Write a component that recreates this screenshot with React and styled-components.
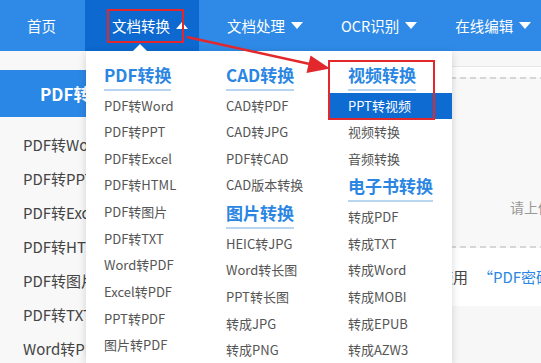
import React from "react";
import styled, { createGlobalStyle } from "styled-components";

const GlobalStyle = createGlobalStyle`
  html, body { margin: 0; padding: 0; }
  body {
    font-family: "Noto Sans CJK SC", "Noto Sans", sans-serif;
    background: #f7f7f7;
  }
`;

const Page = styled.div`
  position: relative;
  width: 541px;
  height: 363px;
  overflow: hidden;
  background: #f7f7f7;
`;

const NavBar = styled.nav`
  display: flex;
  height: 51px;
  background: #2e8ae6;
`;

const NavItem = styled.div`
  display: flex;
  align-items: center;
  gap: 6px;
  height: 100%;
  padding: ${(p) =>
    p.$plain ? "0 29px 0 27px" : p.$active ? "0 11px 0 27px" : "0 10px 0 28px"};
  background: ${(p) => (p.$active ? "#0d69cf" : "transparent")};
  color: #fff;
  font-size: 14.5px;
  white-space: nowrap;
`;

const Caret = styled.span`
  width: 0;
  height: 0;
  border-left: 6px solid transparent;
  border-right: 6px solid transparent;
  ${(p) =>
    p.$up
      ? "border-bottom: 7px solid #fff;"
      : "border-top: 7px solid #fff;"}
`;

const Body = styled.div`
  display: flex;
  height: 312px;
`;

const Sidebar = styled.aside`
  width: 220px;
  flex: none;
  padding-top: 19px;
  background: #f8f8f8;
`;

const SideHeader = styled.div`
  height: 47px;
  line-height: 47px;
  padding-left: 40px;
  background: #2b87e5;
  color: #fff;
  font-size: 17px;
  font-weight: 700;
`;

const SideList = styled.ul`
  list-style: none;
  margin: 0;
  padding: 11px 0 0 23px;
`;

const SideItem = styled.li`
  height: 34px;
  line-height: 34px;
  color: #444;
  font-size: 15px;
`;

const Main = styled.main`
  flex: 1;
  padding-top: 15px;
`;

const Card = styled.section`
  background: #fdfdfd;
  border-top: 1px solid #e6e6e6;
  padding-top: 10px;
`;

const UploadBox = styled.div`
  height: 171px;
  border-top: 2px dashed #d6d6d6;
  border-bottom: 2px dashed #d6d6d6;
  background: #f8f8f8;
  padding: 118px 0 0 290px;
  box-sizing: border-box;
  color: #999;
  font-size: 14px;
  white-space: nowrap;
`;

const InfoRow = styled.div`
  height: 58px;
  line-height: 58px;
  padding-left: 188px;
  background: #fff;
  color: #444;
  font-size: 15px;
  white-space: nowrap;
`;

const Blue = styled.span`
  margin-left: 10px;
  color: #2a86e2;
`;

const Dropdown = styled.div`
  position: absolute;
  left: 86px;
  top: 51px;
  width: 366px;
  height: 312px;
  display: grid;
  grid-template-columns: repeat(3, 122px);
  align-content: start;
  padding-top: 10px;
  box-sizing: border-box;
  background: #fff;
  box-shadow: 0 2px 8px rgba(0, 0, 0, 0.16);
`;

const Pointer = styled.span`
  position: absolute;
  left: 47px;
  top: -7px;
  width: 0;
  height: 0;
  border-left: 7px solid transparent;
  border-right: 7px solid transparent;
  border-bottom: 7px solid #fff;
`;

const Column = styled.div`
  display: flex;
  flex-direction: column;
`;

const HeaderWrap = styled.div`
  padding-left: 18px;
  height: 31.5px;
`;

const Header = styled.span`
  display: inline-block;
  line-height: 27px;
  padding-bottom: 1px;
  border-bottom: 2px solid #b9d5f2;
  color: #2a86e2;
  font-size: 17px;
  font-weight: 700;
`;

const Item = styled.div`
  height: 26.67px;
  line-height: 26.67px;
  padding-left: 18px;
  font-size: 13px;
  color: ${(p) => (p.$active ? "#fff" : "#555")};
  background: ${(p) => (p.$active ? "#0d6bd1" : "transparent")};
  white-space: nowrap;
`;

const RedBox = styled.div`
  position: absolute;
  border: 2px solid #e2282c;
  box-sizing: border-box;
  pointer-events: none;
`;

const ArrowSvg = styled.svg`
  position: absolute;
  left: 0;
  top: 0;
  pointer-events: none;
`;

const columns = [
  [
    { h: "PDF转换" },
    "PDF转Word",
    "PDF转PPT",
    "PDF转Excel",
    "PDF转HTML",
    "PDF转图片",
    "PDF转TXT",
    "Word转PDF",
    "Excel转PDF",
    "PPT转PDF",
    "图片转PDF",
  ],
  [
    { h: "CAD转换" },
    "CAD转PDF",
    "CAD转JPG",
    "PDF转CAD",
    "CAD版本转换",
    { h: "图片转换" },
    "HEIC转JPG",
    "Word转长图",
    "PPT转长图",
    "转成JPG",
    "转成PNG",
  ],
  [
    { h: "视频转换" },
    { t: "PPT转视频", active: true },
    "视频转换",
    "音频转换",
    { h: "电子书转换" },
    "转成PDF",
    "转成TXT",
    "转成Word",
    "转成MOBI",
    "转成EPUB",
    "转成AZW3",
  ],
];

const sideItems = [
  "PDF转Word",
  "PDF转PPT",
  "PDF转Excel",
  "PDF转HTML",
  "PDF转图片",
  "PDF转TXT",
  "Word转PDF",
];

export default function App() {
  return (
    <Page>
      <GlobalStyle />
      <NavBar>
        <NavItem $plain>首页</NavItem>
        <NavItem $active>
          文档转换
          <Caret $up />
        </NavItem>
        <NavItem>
          文档处理
          <Caret />
        </NavItem>
        <NavItem>
          OCR识别
          <Caret />
        </NavItem>
        <NavItem>
          在线编辑
          <Caret />
        </NavItem>
      </NavBar>
      <Body>
        <Sidebar>
          <SideHeader>PDF转换</SideHeader>
          <SideList>
            {sideItems.map((s) => (
              <SideItem key={s}>{s}</SideItem>
            ))}
          </SideList>
        </Sidebar>
        <Main>
          <Card>
            <UploadBox>请上传PDF文件</UploadBox>
            <InfoRow>
              推荐使用<Blue>“PDF密码删除”</Blue>
            </InfoRow>
          </Card>
        </Main>
      </Body>

      <Dropdown>
        <Pointer />
        {columns.map((col, i) => (
          <Column key={i}>
            {col.map((c, j) =>
              typeof c === "object" && c.h ? (
                <HeaderWrap key={j}>
                  <Header>{c.h}</Header>
                </HeaderWrap>
              ) : typeof c === "object" ? (
                <Item key={j} $active={c.active}>
                  {c.t}
                </Item>
              ) : (
                <Item key={j}>{c}</Item>
              )
            )}
          </Column>
        ))}
      </Dropdown>

      <RedBox style={{ left: 107, top: 9, width: 77, height: 34 }} />
      <RedBox style={{ left: 328, top: 60, width: 107, height: 60 }} />
      <ArrowSvg width="541" height="363" viewBox="0 0 541 363">
        <line x1="187" y1="37" x2="312" y2="64.5" stroke="#e2282c" strokeWidth="2.5" />
        <polygon points="330,68.5 306.5,73 310.5,55.5" fill="#e2282c" />
      </ArrowSvg>
    </Page>
  );
}
